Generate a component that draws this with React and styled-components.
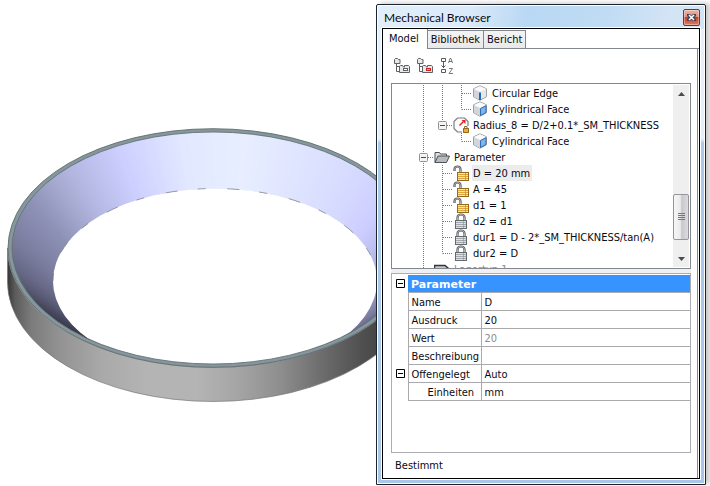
import React, { useState } from "react";
import styled, { createGlobalStyle, css } from "styled-components";

const colors = {
  text: "#0a0a14",
  muted: "#8c8c8c",
  border: "#828790",
  softBorder: "#abadb3",
  gridLine: "#a9a9ae",
  header: "#3793ff",
  face: "#f0f0f2",
};

const GlobalStyle = createGlobalStyle`
  * {
    box-sizing: border-box;
  }
  body {
    margin: 0;
    background: #fff;
    color: ${colors.text};
    font: 11px/16px "DejaVu Sans Condensed", "DejaVu Sans", sans-serif;
  }
  button {
    padding: 0;
    border: 0;
    background: none;
    color: inherit;
    font: inherit;
  }
`;

const Page = styled.main`
  display: grid;
  grid-template-columns: minmax(0, 1fr) minmax(330px, 46%);
  min-height: 100vh;
  padding-right: 4px;
  overflow: hidden;
`;

const Scene = styled.section`
  overflow: hidden;
  svg {
    display: block;
    width: 100%;
    height: 100%;
  }
`;

const Window = styled.section`
  display: flex;
  flex-direction: column;
  margin: 4px 0 1px;
  padding: 0 5px 5px;
  border: 1px solid #1d232c;
  border-radius: 2px 2px 0 0;
  background:
    linear-gradient(100deg, #e2eefa 0, #dcebf9 90px, #b9d8f3 150px, #c0dcf4 230px, #d3e4f5 290px) 0 0 / 100% 24px no-repeat,
    linear-gradient(#e6f1fb 0, #e4effa 134px, #abc9e9 138px, #a9c6e6 100%);
  box-shadow: inset 0 0 0 1px #fff, 4px -1px 5px rgba(0, 0, 0, 0.22);
`;

const TitleBar = styled.header`
  display: flex;
  align-items: center;
  justify-content: space-between;
  height: 23px;
  padding: 2px 0 0 2px;
`;

const Title = styled.h1`
  margin: 0;
  font: 12px/16px Lato, sans-serif;
`;

const CloseButton = styled.button`
  display: grid;
  place-items: center;
  width: 17px;
  height: 17px;
  border: 1px solid #5c3f45;
  border-radius: 2px;
  background: linear-gradient(#eeb3a4 0, #de8d7a 45%, #c6402a 50%, #e07a5e 100%);
  box-shadow: inset 0 0 0 1px rgba(255, 255, 255, 0.35);
`;

const Client = styled.div`
  display: flex;
  flex: 1;
  flex-direction: column;
  border: 1px solid #000;
  outline: 1px solid #fff;
  background: #fff;
`;

const TabList = styled.div`
  display: flex;
  align-items: flex-end;
  height: 20px;
`;

const Tab = styled.button`
  height: 19px;
  padding: 1px 3px 0;
  white-space: nowrap;
  border: 1px solid ${colors.border};
  border-left-width: 0;
  background: linear-gradient(#f4f4f4, #e9e9eb);
  ${({ $selected }) =>
    $selected &&
    css`
      height: 20px;
      padding: 0 8px 1px 6px;
      border-width: 0 1px 0 0;
      background: #fff;
    `};
`;

const TabFill = styled.div`
  flex: 1;
  align-self: stretch;
  border-bottom: 1px solid ${colors.border};
`;

const TabPage = styled.div`
  display: flex;
  flex: 1;
  flex-direction: column;
  margin-right: 1px;
  padding: 0 6px 0 8px;
  border-right: 1px solid ${colors.border};
`;

const Toolbar = styled.div`
  display: flex;
  gap: 7px;
  padding: 8px 3px;
  button {
    height: 18px;
  }
  svg {
    display: block;
  }
`;

const TreeBox = styled.div`
  display: flex;
  height: 186px;
  padding: 1px 1px 0 0;
  border: 1px solid ${colors.border};
  overflow: hidden;
`;

const TreeList = styled.ul`
  flex: 1;
  margin: 0;
  padding: 0 0 0 22px;
  list-style: none;
`;

const TreeRow = styled.li`
  display: flex;
  height: 16px;
  white-space: nowrap;
  svg {
    display: block;
    flex: none;
  }
`;

const RowIcon = styled.span`
  width: 19px;
  padding-left: 1px;
`;

const RowLabel = styled.span`
  margin-left: 1px;
  padding: 1px 2px 0 1px;
  color: ${({ $faded }) => ($faded ? colors.muted : "inherit")};
  background: ${({ $active }) => ($active ? "#ececec" : "none")};
`;

const ScrollBar = styled.div`
  display: flex;
  flex-direction: column;
  width: 16px;
  margin-bottom: 1px;
  background: #efefef;
`;

const ScrollArrow = styled.button`
  display: grid;
  place-items: center;
  height: 17px;
`;

const ScrollTrack = styled.div`
  display: flex;
  flex: 1;
  flex-direction: column;
  justify-content: flex-end;
  padding-bottom: 10px;
`;

const ScrollThumb = styled.div`
  display: grid;
  place-items: center;
  height: 46px;
  border: 1px solid #96969a;
  border-radius: 2px;
  background: linear-gradient(90deg, #f6f6f6 0, #ebebed 45%, #c8c8cc 55%, #dcdce0 100%);
`;

const Splitter = styled.div`
  height: 4px;
  background: ${colors.face};
`;

const PropertyBox = styled.div`
  flex: 1;
  border: 1px solid ${colors.softBorder};
`;

const PropertyTable = styled.table`
  width: 100%;
  border-collapse: collapse;
  table-layout: fixed;
  th,
  td {
    height: 18px;
    padding: 3px 3px 0;
    border: 1px solid ${colors.gridLine};
    font-weight: normal;
    line-height: 14px;
    text-align: left;
    white-space: nowrap;
  }
  th:last-child,
  td:last-child {
    border-right: 0;
  }
`;

const GroupHeading = styled.th`
  && {
    border-top: 1px solid #fff;
    border-left: 0;
    background: ${colors.header};
    color: #fff;
    font: bold 11px/14px "DejaVu Sans", sans-serif;
  }
`;

const Gutter = styled.td`
  && {
    padding: 0 0 0 4px;
    border-width: 0;
  }
`;

const PropertyName = styled.th`
  && {
    padding-left: ${({ $indent }) => ($indent ? 19 : 3)}px;
  }
`;

const PropertyValue = styled.td`
  color: ${({ $readOnly }) => ($readOnly ? colors.muted : "inherit")};
`;

const Toggle = styled.button`
  display: block;
  svg {
    display: block;
  }
`;

const Status = styled.footer`
  padding: 5px 4px 4px;
`;

/* ---- ring model ---- */

const rim = { cx: 213, cy: 248, rx: 201, ry: 116 };
const hole = { cx: 215, cy: 281, rx: 162, ry: 92.5 };

// shade of the inner cone by angle, counter-clockwise from the right
const coneShades = [
  [-60, [72, 72, 92]],
  [-40, [104, 105, 134]],
  [-15, [140, 142, 180]],
  [10, [178, 181, 226]],
  [27, [204, 205, 255]],
  [45, [215, 219, 255]],
  [80, [231, 238, 255]],
  [98, [226, 233, 255]],
  [118, [204, 207, 255]],
  [136, [178, 181, 222]],
  [155, [142, 146, 182]],
  [175, [122, 124, 158]],
  [190, [102, 103, 132]],
  [208, [70, 71, 92]],
  [225, [52, 52, 64]],
  [300, [52, 52, 64]],
];

const shadeAt = (deg) => {
  const i = coneShades.findIndex(([stop]) => stop > deg);
  const [a, from] = coneShades[i - 1];
  const [b, to] = coneShades[i];
  const t = (deg - a) / (b - a);
  return `rgb(${from.map((c, n) => Math.round(c + (to[n] - c) * t)).join(",")})`;
};

const pointOn = (e, deg) => {
  const rad = (deg * Math.PI) / 180;
  return `${(e.cx + e.rx * Math.cos(rad)).toFixed(2)},${(e.cy - e.ry * Math.sin(rad)).toFixed(2)}`;
};

const slices = Array.from({ length: 300 }, (_, i) => i - 60);

const RingModel = () => (
  <svg viewBox="0 0 376 486" preserveAspectRatio="xMinYMin slice" role="img" aria-label="Ring">
    <defs>
      <linearGradient id="wall" gradientUnits="userSpaceOnUse" x1="7" y1="0" x2="419" y2="0">
        <stop offset="0" stopColor="#333" />
        <stop offset="0.02" stopColor="#5c5c5c" />
        <stop offset="0.06" stopColor="#7c7c7c" />
        <stop offset="0.13" stopColor="#939393" />
        <stop offset="0.23" stopColor="#a9a9a9" />
        <stop offset="0.34" stopColor="#b4b4b4" />
        <stop offset="0.46" stopColor="#b4b4b4" />
        <stop offset="0.56" stopColor="#a5a5a5" />
        <stop offset="0.66" stopColor="#8f8f8f" />
        <stop offset="0.76" stopColor="#6e6e6e" />
        <stop offset="0.86" stopColor="#505050" />
        <stop offset="1" stopColor="#333" />
      </linearGradient>
      <clipPath id="inside">
        <ellipse {...rim} />
      </clipPath>
    </defs>
    <path
      d="M7.500 248V282A205.500 119.500 0 0 0 418.500 282V248A205.500 119.500 0 0 1 7.500 248Z"
      fill="url(#wall)"
      stroke="#777"
      strokeWidth="0.700"
    />
    <ellipse cx="213" cy="248" rx="205" ry="119.300" fill="#82979e" stroke="#666c6d" strokeWidth="0.900" />
    <g clipPath="url(#inside)">
      {slices.map((deg) => (
        <polygon
          key={deg}
          points={[pointOn(rim, deg), pointOn(rim, deg + 3), pointOn(hole, deg + 3), pointOn(hole, deg)].join(" ")}
          fill={shadeAt(deg)}
        />
      ))}
      <ellipse {...hole} fill="#fff" />
      <path
        d="M53 281A162 92.500 0 0 1 377 281"
        fill="none"
        stroke="#77777c"
        strokeWidth="0.700"
        strokeDasharray="8 22 12 20"
      />
    </g>
    <ellipse {...rim} fill="none" stroke="#6a7172" strokeWidth="0.900" />
  </svg>
);

/* ---- icons ---- */

const CloseIcon = () => (
  <svg width="9" height="9" viewBox="0 0 9 9">
    <path d="M0 1h3l1.500 1.500L6 1h3v2L7.500 4.500 9 6v2H6L4.500 6.500 3 8H0V6l1.500-1.500L0 3z" fill="#43465a" />
    <path d="M2 2l5 5M7 2L2 7" stroke="#fff" strokeWidth="1.500" />
  </svg>
);

const FoldersIcon = ({ accent }) => (
  <svg width="16" height="18" viewBox="0 0 16 18" fill="#fff" stroke="#5c6166">
    <path d="M.5 6.500v-4l1-1h2l1 1h1.500v4z" fill="#e9e9ea" />
    <path d="M2.500 7v7.500H5M2.500 9.500H5" fill="none" />
    <path d="M5.500 15.500V9l1-.5h2l1 1.500h1V8.500h4l1 1v6z" fill="#e9e9ea" />
    <rect x="9.500" y="11.500" width="4" height="2" stroke={accent || "#5c6166"} fill={accent ? "#f6a0a0" : "#fff"} />
  </svg>
);

const SortIcon = () => (
  <svg width="14" height="18" viewBox="0 0 14 18" fill="none" stroke="#555a5e">
    <path d="M1.500 1.500h4v3h-4zM1.500 12.500h4v3h-4zM3.500 5v6M1.500 8.500l2 2 2-2" />
    <path d="M8.500 6l1.500-4.500h1L12.500 6M9 4.500h3M9 11.500h3.500L9 16.500h4" strokeWidth="0.800" />
  </svg>
);

const CubeIcon = ({ part }) => (
  <svg width="16" height="16" viewBox="0 0 16 16">
    <path d="M8 .8l6.500 3v8L8 15.300l-6.500-3.500v-8z" fill="#e6e8ea" stroke="#9da1a5" />
    <path d="M2 4.200L8 7v8l-6-3.300z" fill="#d2d5d9" />
    <path d="M2 4l6-2.700L14 4 8 6.800z" fill="#fbfbfb" />
    {part === "face" ? (
      <path d="M8.500 7.500l5.500-2.800v6.800l-5.500 3z" fill="#80b5ea" stroke="#2f6db3" />
    ) : (
      <path d="M8 7.500v7.500" stroke="#1c6bc0" strokeWidth="2" />
    )}
  </svg>
);

const RadiusIcon = () => (
  <svg width="16" height="16" viewBox="0 0 16 16">
    <path d="M9 15H4.500L1 11.500v-7L4.500 1h7L15 4.500V9" fill="#fdfdfd" stroke="#7c7c80" strokeWidth="1.200" />
    <path d="M6.500 8.500l4-4" stroke="#e02424" strokeWidth="1.500" />
    <path d="M8.500 3H12.500V7z" fill="#e02424" />
    <path d="M11.500 11V9.500h2.500V11" fill="none" stroke="#8a6d33" />
    <rect x="10" y="11" width="6" height="5" fill="#e3ad3d" />
    <path d="M10.500 11.500h5v4h-5z" fill="none" stroke="#94671a" />
  </svg>
);

const FolderIcon = () => (
  <svg width="16" height="16" viewBox="0 0 16 16">
    <path d="M1 13.500V3.500h4.500l1 1.500h6v2.500" fill="#dcdee0" stroke="#4c5156" />
    <path d="M1 13.500l3-6.500h11.500l-3 6.500z" fill="#b7bbc0" stroke="#4c5156" />
  </svg>
);

const LockIcon = ({ open }) => {
  const x = open ? 4 : 2;
  return (
    <svg width="16" height="16" viewBox="0 0 16 16">
      <path
        d={open ? "M1.500 6V4.500a3 3 0 0 1 6 0V8" : "M4.500 8V4.500a3.500 3 0 0 1 7 0V8"}
        fill="none"
        stroke="#505458"
        strokeWidth="2.200"
      />
      <path
        d={open ? "M1.500 5.500V4.500a3 3 0 0 1 6 0V8" : "M4.500 8V4.500a3.500 3 0 0 1 7 0V8"}
        fill="none"
        stroke="#d8dadc"
        strokeWidth="0.700"
      />
      <rect x={x + 0.5} y="7.500" width="11" height="8" fill={open ? "#d9a640" : "#a2a8ab"} stroke={open ? "#96691c" : "#64696d"} />
      <path d={`M${x + 1} 8.500h10M${x + 1} 10.500h10M${x + 1} 12.500h10M${x + 1} 14.500h10`} stroke={open ? "#fbe7a8" : "#dfe2e4"} />
      <path d={`M${x + 8.5} 8v7`} stroke={open ? "#b98424" : "#8d9296"} strokeWidth="0.600" />
    </svg>
  );
};

const SheetIcon = () => (
  <svg width="16" height="16" viewBox="0 0 16 16">
    <path d="M.5 15V4.500H11l3.500 3V15" fill="#c5c8cb" stroke="#33373b" strokeWidth="1.500" />
  </svg>
);

const icons = {
  edge: <CubeIcon part="edge" />,
  face: <CubeIcon part="face" />,
  radius: <RadiusIcon />,
  folder: <FolderIcon />,
  open: <LockIcon open />,
  lock: <LockIcon />,
  sheet: <SheetIcon />,
};

// one 19px column of the tree: "line" passes by, "tee" and "end" branch, "box" expands
const Guide = ({ kind, last }) => (
  <svg width="19" height="16" viewBox="0 0 19 16">
    {kind !== "none" && (
      <g fill="none" stroke="#77777c" strokeDasharray="1 1">
        <path d={kind === "end" || last ? "M9.500 0V8.500" : "M9.500 0V16"} />
        {kind !== "line" && <path d="M10 8.500H19" />}
      </g>
    )}
    {kind === "box" && (
      <>
        <rect x="5.500" y="4.500" width="8" height="8" rx="1" fill="#f4f4f4" stroke="#919191" />
        <path d="M7 8.500h5" stroke="#33449a" />
      </>
    )}
  </svg>
);

const rows = [
  { guides: ["line", "line", "tee"], icon: "edge", label: "Circular Edge" },
  { guides: ["line", "line", "end"], icon: "face", label: "Cylindrical Face" },
  { guides: ["line", "box"], last: true, icon: "radius", label: "Radius_8 = D/2+0.1*_SM_THICKNESS" },
  { guides: ["line", "none", "end"], icon: "face", label: "Cylindrical Face" },
  { guides: ["box"], icon: "folder", label: "Parameter" },
  { guides: ["line", "tee"], icon: "open", label: "D = 20 mm", active: true },
  { guides: ["line", "tee"], icon: "open", label: "A = 45" },
  { guides: ["line", "tee"], icon: "open", label: "d1 = 1" },
  { guides: ["line", "tee"], icon: "lock", label: "d2 = d1" },
  { guides: ["line", "tee"], icon: "lock", label: "dur1 = D - 2*_SM_THICKNESS/tan(A)" },
  { guides: ["line", "end"], icon: "lock", label: "dur2 = D" },
  { guides: ["line"], icon: "sheet", label: "Lagertyp 1", faded: true },
];

const properties = [
  { name: "Name", value: "D" },
  { name: "Ausdruck", value: "20" },
  { name: "Wert", value: "20", readOnly: true },
  { name: "Beschreibung", value: "" },
  { name: "Offengelegt", value: "Auto", toggle: true },
  { name: "Einheiten", value: "mm", indent: true },
];

const Collapse = ({ label }) => (
  <Toggle aria-label={label} aria-expanded="true">
    <svg width="9" height="9" viewBox="0 0 9 9">
      <path d="M.5.500h8v8h-8zM2 4.500h5" fill="#fff" stroke="#000" />
    </svg>
  </Toggle>
);

const Arrow = ({ down }) => (
  <svg width="7" height="4" viewBox="0 0 7 4">
    <path d={down ? "M0 0h7L3.500 4z" : "M0 4h7L3.500 0z"} fill="#4b4b4e" />
  </svg>
);

export default function App() {
  const [tab, setTab] = useState("Model");

  return (
    <>
      <GlobalStyle />
      <Page>
        <Scene>
          <RingModel />
        </Scene>
        <Window>
          <TitleBar>
            <Title>Mechanical Browser</Title>
            <CloseButton aria-label="Close">
              <CloseIcon />
            </CloseButton>
          </TitleBar>
          <Client>
            <TabList role="tablist">
              {["Model", "Bibliothek", "Bericht"].map((name) => (
                <Tab
                  key={name}
                  role="tab"
                  aria-selected={tab === name}
                  $selected={tab === name}
                  onClick={() => setTab(name)}
                >
                  {name}
                </Tab>
              ))}
              <TabFill />
            </TabList>
            <TabPage>
              <Toolbar>
                <button aria-label="Collapse tree">
                  <FoldersIcon />
                </button>
                <button aria-label="Filter tree">
                  <FoldersIcon accent="#d02020" />
                </button>
                <button aria-label="Sort">
                  <SortIcon />
                </button>
              </Toolbar>
              <TreeBox>
                <TreeList role="tree">
                  {rows.map(({ guides, icon, label, active, faded, last }, i) => (
                    <TreeRow key={i} role="treeitem" aria-selected={!!active}>
                      {guides.map((kind, n) => (
                        <Guide key={n} kind={kind} last={last && kind === "box"} />
                      ))}
                      <RowIcon>{icons[icon]}</RowIcon>
                      <RowLabel $active={active} $faded={faded}>
                        {label}
                      </RowLabel>
                    </TreeRow>
                  ))}
                </TreeList>
                <ScrollBar>
                  <ScrollArrow aria-label="Scroll up">
                    <Arrow />
                  </ScrollArrow>
                  <ScrollTrack>
                    <ScrollThumb>
                      <svg width="7" height="8" viewBox="0 0 7 8">
                        <path d="M0 .5h7M0 2.500h7M0 4.500h7M0 6.500h7" stroke="#77777c" />
                      </svg>
                    </ScrollThumb>
                  </ScrollTrack>
                  <ScrollArrow aria-label="Scroll down">
                    <Arrow down />
                  </ScrollArrow>
                </ScrollBar>
              </TreeBox>
              <Splitter />
              <PropertyBox>
                <PropertyTable>
                  <colgroup>
                    <col width="16" />
                    <col width="73" />
                    <col />
                  </colgroup>
                  <thead>
                    <tr>
                      <Gutter>
                        <Collapse label="Parameter" />
                      </Gutter>
                      <GroupHeading colSpan="2">Parameter</GroupHeading>
                    </tr>
                  </thead>
                  <tbody>
                    {properties.map(({ name, value, readOnly, toggle, indent }) => (
                      <tr key={name}>
                        <Gutter>{toggle && <Collapse label={name} />}</Gutter>
                        <PropertyName scope="row" $indent={indent}>
                          {name}
                        </PropertyName>
                        <PropertyValue $readOnly={readOnly}>{value}</PropertyValue>
                      </tr>
                    ))}
                  </tbody>
                </PropertyTable>
              </PropertyBox>
              <Status>Bestimmt</Status>
            </TabPage>
          </Client>
        </Window>
      </Page>
    </>
  );
}
